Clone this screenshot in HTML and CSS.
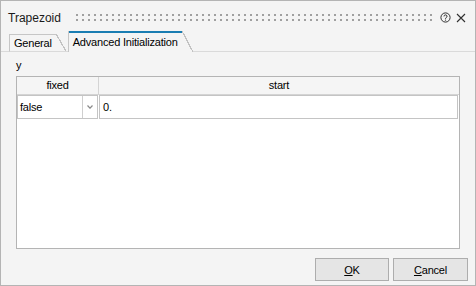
FILE: index.html
```html
<!DOCTYPE html>
<html lang="en">

<head>
	<meta charset="UTF-8">
	<title>Trapezoid</title>
	<link rel="stylesheet" href="styles.css">
</head>

<body>
	<div class="dialog">
		<div class="titlebar">
			<span class="title">Trapezoid</span>
			<span class="grip"></span>
			<svg class="help" width="11" height="11" viewBox="0 0 11 11">
				<circle cx="5.5" cy="5.5" r="4.6" fill="none" stroke="#303030" stroke-width="1"/>
				<path d="M4 4.4a1.5 1.5 0 1 1 2.2 1.3c-.5.3-.7.6-.7 1.2" fill="none" stroke="#303030" stroke-width="1"/>
				<circle cx="5.5" cy="8.1" r=".65" fill="#303030"/>
			</svg>
			<svg class="close" width="10" height="10" viewBox="0 0 10 10">
				<path d="M1 1l8 8M9 1l-8 8" stroke="#303030" stroke-width="1.1"/>
			</svg>
		</div>

		<div class="tabs">
			<div class="tab">General</div>
			<div class="tab active">Advanced Initialization</div>
		</div>

		<div class="panel">
			<div class="label">y</div>
			<div class="grid">
				<div class="grid-head">
					<div class="th">fixed</div>
					<div class="th sep">start</div>
				</div>
				<div class="grid-row">
					<div class="cell combo">
						<span class="combo-value">false</span>
						<span class="combo-arrow">
							<svg width="6" height="4" viewBox="0 0 6 4">
								<path d="M0.5 0.5L3 3.2L5.5 0.5" fill="none" stroke="#8a8a8a" stroke-width="1.2"/>
							</svg>
						</span>
					</div>
					<div class="cell value">0.</div>
				</div>
			</div>
		</div>

		<div class="footer">
			<button class="btn btn-ok"><u>O</u>K</button>
			<button class="btn btn-cancel"><u>C</u>ancel</button>
		</div>
	</div>
</body>

</html>
```

FILE: styles.css
```css
* {
	margin: 0;
	padding: 0;
	box-sizing: border-box;
}

body {
	width: 476px;
	height: 286px;
	background: #f4f4f4;
	font-family: "Liberation Sans", Arial, sans-serif;
	font-size: 11px;
	letter-spacing: -0.2px;
	color: #000;
}

.dialog {
	display: flex;
	flex-direction: column;
	width: 476px;
	height: 286px;
	border: 1px solid #b4b4b4;
	background: #f4f4f4;
}

/* title bar */
.titlebar {
	display: flex;
	align-items: center;
	height: 30px;
	padding: 3px 0 0 7px;
}

.title {
	font-size: 12px;
	letter-spacing: 0;
	color: #1a1a1a;
}

.grip {
	flex: 1;
	height: 7px;
	margin: 0 5px 0 15px;
	background:
		linear-gradient(transparent 2px, #f4f4f4 2px) 0 0 / 6px 5px,
		linear-gradient(90deg, #a0a0a0 2px, transparent 2px) 0 0 / 6px 5px;
}

.help {
	margin-right: 5px;
}

.close {
	margin-right: 9px;
}

/* tabs */
.tabs {
	display: flex;
	align-items: flex-end;
	gap: 2px;
	height: 21px;
	padding-left: 8px;
	border-bottom: 1px solid #dadada;
}

.tab {
	height: 18px;
	padding: 3px 14px 0 4px;
	border-left: 1px solid #c6c6c6;
	margin-bottom: -1px;
	line-height: 13px;
	background:
		linear-gradient(#c6c6c6, #c6c6c6) left top / calc(100% - 10px) 1px no-repeat,
		linear-gradient(to top right, #f4f4f4 calc(50% - 0.6px), #c2c2c2 calc(50% - 0.6px), #c2c2c2 calc(50% + 0.6px), transparent calc(50% + 0.6px)) right top / 10px 100% no-repeat,
		linear-gradient(#f4f4f4, #f4f4f4) left top / calc(100% - 10px) 100% no-repeat;
	border-bottom: 1px solid #dadada;
}

.tab.active {
	height: 21px;
	padding: 5px 15px 0 4px;
	border-bottom: none;
	background:
		linear-gradient(#1a7db2, #1a7db2) left top / calc(100% - 11px) 2px no-repeat,
		linear-gradient(to top right, #f4f4f4 calc(50% - 0.6px), #c2c2c2 calc(50% - 0.6px), #c2c2c2 calc(50% + 0.6px), transparent calc(50% + 0.6px)) right top / 11px 100% no-repeat,
		linear-gradient(#f4f4f4, #f4f4f4) left top / calc(100% - 11px) 100% no-repeat;
}

/* panel with grid */
.panel {
	padding: 7px 15px 0 15px;
}

.label {
	height: 13px;
	line-height: 13px;
	margin-bottom: 4px;
}

.grid {
	display: flex;
	flex-direction: column;
	height: 173px;
	border: 1px solid #b4b4b4;
	background: #fff;
}

.grid-head {
	display: grid;
	grid-template-columns: 81px 1fr;
	height: 18px;
	border-bottom: 1px solid #d4d4d4;
	background: #f5f5f5;
}

.th {
	text-align: center;
	line-height: 17px;
}

.th.sep {
	border-left: 1px solid #d4d4d4;
}

.grid-row {
	display: grid;
	grid-template-columns: 81px 1fr;
	gap: 1px;
	height: 24px;
	padding-right: 1px;
}

.cell {
	border: 1px solid #c4c4c4;
	line-height: 22px;
	padding-left: 2px;
}

.combo {
	display: flex;
}

.combo-value {
	flex: 1;
}

.combo-arrow {
	display: flex;
	align-items: center;
	justify-content: center;
	width: 15px;
	border-left: 1px solid #cfcfcf;
}

.value {
	padding-left: 3px;
}

/* buttons */
.footer {
	display: flex;
	justify-content: flex-end;
	gap: 4px;
	padding: 9px 7px 0 0;
}

.btn {
	height: 23px;
	border: 1px solid #adadad;
	background: #e5e5e5;
	font-family: inherit;
	font-size: 11px;
	letter-spacing: -0.2px;
	color: #000;
}

.btn-ok {
	width: 74px;
}

.btn-cancel {
	width: 75px;
}
```
